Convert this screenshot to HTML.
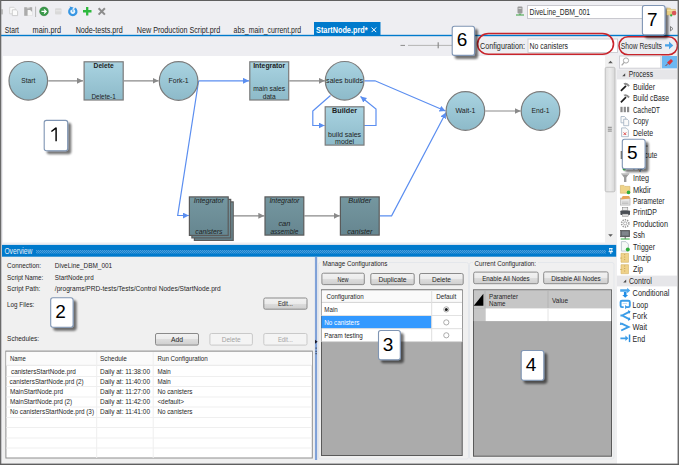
<!DOCTYPE html>
<html><head><meta charset="utf-8"><style>
html,body{margin:0;padding:0;width:679px;height:465px;overflow:hidden;background:#eeeef2}
svg{display:block}
text{font-family:"Liberation Sans",sans-serif;white-space:pre}
</style></head><body>
<svg width="679" height="465" viewBox="0 0 679 465">
<defs>
<linearGradient id="ng" x1="0" y1="0" x2="0" y2="1"><stop offset="0" stop-color="#a9d3e1"/><stop offset="1" stop-color="#8dbac9"/></linearGradient>
<linearGradient id="dg" x1="0" y1="0" x2="0" y2="1"><stop offset="0" stop-color="#7597a0"/><stop offset="1" stop-color="#668690"/></linearGradient>
<linearGradient id="btn" x1="0" y1="0" x2="0" y2="1"><stop offset="0" stop-color="#f2f2f2"/><stop offset="0.5" stop-color="#ebebeb"/><stop offset="0.5" stop-color="#dddddd"/><stop offset="1" stop-color="#cfcfcf"/></linearGradient>
<marker id="ag" markerWidth="6" markerHeight="6" refX="6" refY="3" orient="auto" markerUnits="userSpaceOnUse"><path d="M0 0L6 3L0 6z" fill="#8a8a8a"/></marker>
<marker id="ab" markerWidth="6" markerHeight="6" refX="6" refY="3" orient="auto" markerUnits="userSpaceOnUse"><path d="M0 0L6 3L0 6z" fill="#5b8ef0"/></marker>
<filter id="sh" x="-30%" y="-30%" width="160%" height="160%"><feGaussianBlur in="SourceAlpha" stdDeviation="1.3"/><feOffset dx="2.5" dy="2.5"/><feComponentTransfer><feFuncA type="linear" slope="0.55"/></feComponentTransfer><feMerge><feMergeNode/><feMergeNode in="SourceGraphic"/></feMerge></filter>
<pattern id="dots" width="2" height="2" patternUnits="userSpaceOnUse"><rect width="2" height="2" fill="#1581ce"/><rect x="0" y="0" width="1" height="1" fill="#4b9fdc"/><rect x="1" y="1" width="1" height="1" fill="#4b9fdc"/></pattern>
<linearGradient id="thumb" x1="0" y1="0" x2="1" y2="0"><stop offset="0" stop-color="#dedede"/><stop offset="0.5" stop-color="#ececec"/><stop offset="1" stop-color="#d6d6d6"/></linearGradient>
</defs>
<rect x="0" y="0" width="679" height="465" fill="#eeeef2" />
<rect x="1.2" y="9.2" width="1.8" height="5.2" fill="#bcbcbc" />
<path d="M9.7 7.3h4.2l1.3 1.3v5.2h-5.5z" fill="#fbfbfb" stroke="#d2d2d2" stroke-width="0.9"/>
<path d="M12.3 9.8h3.9l1.4 1.4v4.4h-5.3z" fill="#fbfbfb" stroke="#c8c8c8" stroke-width="0.9"/>
<rect x="24.2" y="7.2" width="8" height="8.6" fill="#ababab"/>
<rect x="26.8" y="7" width="2.8" height="1.4" fill="#dcdcdc"/>
<path d="M27.6 9.9h2.6l2 2v3.9h-4.6z" fill="#f7f7f7"/>
<line x1="35.6" y1="6.6" x2="35.6" y2="17" stroke="#b0b0b0" stroke-width="0.9" />
<circle cx="44" cy="11.4" r="4.3" fill="#3b9b4b" stroke="#2e7f3b" stroke-width="0.6"/>
<path d="M41.4 11.4h4.6M44.1 9.3l2.1 2.1-2.1 2.1" fill="none" stroke="#fff" stroke-width="1.2"/>
<rect x="55" y="8.2" width="6.5" height="6.4" rx="1" fill="#d9d9d9"/>
<rect x="55.5" y="10.3" width="5.5" height="1" fill="#e8e8e8"/>
<circle cx="72.8" cy="11.5" r="3.6" fill="#eaf4fc"/>
<path d="M74.6 8.4A3.6 3.6 0 1 1 71 8.4" fill="none" stroke="#3796e3" stroke-width="2.2"/>
<path d="M69.6 6.6L73.6 7.4L70.9 10.5z" fill="#3796e3"/>
<path d="M72.8 12V9.2" stroke="#5aaee8" stroke-width="1"/>
<path d="M87.2 7v8.5M83 11.25h8.5" stroke="#2db83d" stroke-width="2.3"/>
<path d="M98.6 8.3l6.3 6.3M104.9 8.3l-6.3 6.3" stroke="#8c8c8c" stroke-width="2"/>
<rect x="517.5" y="6.5" width="5" height="7" rx="1" fill="#9a9a9a"/>
<rect x="518.5" y="8" width="3" height="1" fill="#d0d0d0"/>
<line x1="516" y1="15" x2="524" y2="15" stroke="#3aa040" stroke-width="1" />
<line x1="520" y1="13.5" x2="520" y2="15" stroke="#3aa040" stroke-width="1" />
<rect x="527.5" y="5.5" width="118" height="13" fill="#ffffff" stroke="#c9c9cf" stroke-width="1" />
<text x="529.5" y="14.7" font-size="8.5" fill="#1e1e1e" textLength="60.5" lengthAdjust="spacingAndGlyphs" >DiveLine_DBM_001</text>
<path d="M670.5 26.5l2.5 2.2-2.5 2.2z" fill="none" stroke="#6a6a6a" stroke-width="0.8"/>
<text x="4.8" y="32.8" font-size="9" fill="#1e1e1e" textLength="14.2" lengthAdjust="spacingAndGlyphs" >Start</text>
<text x="32.6" y="32.8" font-size="9" fill="#1e1e1e" textLength="28.4" lengthAdjust="spacingAndGlyphs" >main.prd</text>
<text x="75.7" y="32.8" font-size="9" fill="#1e1e1e" textLength="47" lengthAdjust="spacingAndGlyphs" >Node-tests.prd</text>
<text x="136.8" y="32.8" font-size="9" fill="#1e1e1e" textLength="83.4" lengthAdjust="spacingAndGlyphs" >New Production Script.prd</text>
<text x="233.6" y="32.8" font-size="9" fill="#1e1e1e" textLength="67.5" lengthAdjust="spacingAndGlyphs" >abs_main_current.prd</text>
<rect x="314" y="22" width="66.5" height="13.5" fill="#007acc" />
<text x="316" y="32.8" font-size="9" fill="#ffffff" textLength="51.6" lengthAdjust="spacingAndGlyphs" font-weight="bold" >StartNode.prd*</text>
<path d="M371.6 27.5l4.6 4.6M376.2 27.5l-4.6 4.6" stroke="#ffffff" stroke-width="1"/>
<rect x="1" y="34.8" width="677" height="1.4" fill="#007acc" />
<line x1="400.5" y1="45.4" x2="405" y2="45.4" stroke="#8a8a8a" stroke-width="1" />
<line x1="408" y1="45.4" x2="452" y2="45.4" stroke="#b4b4b4" stroke-width="1" />
<rect x="437.6" y="42.3" width="1.2" height="6" fill="#8a8a8a" />
<text x="480" y="48.8" font-size="8.5" fill="#1e1e1e" textLength="45" lengthAdjust="spacingAndGlyphs" >Configuration:</text>
<rect x="528" y="39" width="89.5" height="13.5" fill="#ffffff" stroke="#cfcfd4" stroke-width="1" />
<text x="529.6" y="48.8" font-size="8.5" fill="#1e1e1e" textLength="38.4" lengthAdjust="spacingAndGlyphs" >No canisters</text>
<text x="620.7" y="48.8" font-size="8.5" fill="#2d2d2d" textLength="41.3" lengthAdjust="spacingAndGlyphs" >Show Results</text>
<path d="M665 44.2h4v-2.6l4.3 3.8-4.3 3.8v-2.6h-4z" fill="#4aa3e8"/>
<rect x="3" y="56" width="602" height="186.5" fill="#ffffff" />
<rect x="605" y="56" width="11.5" height="186.5" fill="#f0f0f0" />
<path d="M608.2 63.2l2.3-2.4 2.3 2.4z" fill="#5a5a5a"/>
<rect x="605.2" y="67.3" width="9.8" height="124.5" rx="1.5" fill="url(#thumb)" stroke="#b8b8b8" stroke-width="0.8"/>
<path d="M608.2 234.3l2.3 2.4 2.3-2.4z" fill="#5a5a5a"/>
<line x1="607.8" y1="127.3" x2="611.8" y2="127.3" stroke="#7a7a7a" stroke-width="0.9" />
<line x1="607.8" y1="129.2" x2="611.8" y2="129.2" stroke="#7a7a7a" stroke-width="0.9" />
<line x1="607.8" y1="131.1" x2="611.8" y2="131.1" stroke="#7a7a7a" stroke-width="0.9" />
<path d="M48.3 80.8H83" stroke="#8a8a8a" stroke-width="1.2" fill="none" marker-end="url(#ag)"/>
<path d="M124 80.8H158.5" stroke="#8a8a8a" stroke-width="1.2" fill="none" marker-end="url(#ag)"/>
<path d="M198.6 80.8H249" stroke="#5b8ef0" stroke-width="1.2" fill="none" marker-end="url(#ab)"/>
<path d="M289.3 80.8H324.8" stroke="#8a8a8a" stroke-width="1.2" fill="none" marker-end="url(#ag)"/>
<path d="M364.5 80.8H375L445.5 111" stroke="#5b8ef0" stroke-width="1.2" fill="none" marker-end="url(#ab)"/>
<path d="M330.5 95.5L314.5 109.5L312.8 111V125.5H324.6" stroke="#5b8ef0" stroke-width="1.2" fill="none" marker-end="url(#ab)"/>
<path d="M364.3 125.5H376V109L360.5 96.5" stroke="#5b8ef0" stroke-width="1.2" fill="none" marker-end="url(#ab)"/>
<path d="M198.6 81L177.7 215.5H188.8" stroke="#5b8ef0" stroke-width="1.2" fill="none" marker-end="url(#ab)"/>
<path d="M229.5 215.8H264.3" stroke="#8a8a8a" stroke-width="1.2" fill="none" marker-end="url(#ag)"/>
<path d="M304.4 215.8H339.7" stroke="#8a8a8a" stroke-width="1.2" fill="none" marker-end="url(#ag)"/>
<path d="M379.8 215.8H391.6L446 112.5" stroke="#5b8ef0" stroke-width="1.2" fill="none" marker-end="url(#ab)"/>
<path d="M485.3 111H520.7" stroke="#8a8a8a" stroke-width="1.2" fill="none" marker-end="url(#ag)"/>
<circle cx="28.3" cy="80.8" r="19.3" fill="url(#ng)" stroke="#7b7b7b" stroke-width="1.2"/>
<text x="28.3" y="83" font-size="7" fill="#222" textLength="14" lengthAdjust="spacingAndGlyphs" text-anchor="middle" >Start</text>
<rect x="84.1" y="61.800000000000004" width="39.099999999999994" height="38.199999999999996" fill="url(#ng)" stroke="#7b7b7b" stroke-width="1.2"/>
<text x="103.6" y="68" font-size="7" fill="#222" textLength="20" lengthAdjust="spacingAndGlyphs" font-weight="bold" text-anchor="middle" >Delete</text>
<text x="103.6" y="99" font-size="7" fill="#222" textLength="24.3" lengthAdjust="spacingAndGlyphs" text-anchor="middle" >Delete-1</text>
<circle cx="178.6" cy="81" r="19.3" fill="url(#ng)" stroke="#7b7b7b" stroke-width="1.2"/>
<text x="178.6" y="83.2" font-size="7" fill="#222" textLength="20" lengthAdjust="spacingAndGlyphs" text-anchor="middle" >Fork-1</text>
<rect x="249.79999999999998" y="61.800000000000004" width="38.9" height="38.199999999999996" fill="url(#ng)" stroke="#7b7b7b" stroke-width="1.2"/>
<text x="269.2" y="68" font-size="7" fill="#222" textLength="32" lengthAdjust="spacingAndGlyphs" font-weight="bold" text-anchor="middle" >Integrator</text>
<text x="269.2" y="91.3" font-size="7" fill="#222" textLength="32" lengthAdjust="spacingAndGlyphs" text-anchor="middle" >main sales</text>
<text x="269.2" y="98.7" font-size="7" fill="#222" textLength="13" lengthAdjust="spacingAndGlyphs" text-anchor="middle" >data</text>
<circle cx="344.6" cy="80.8" r="19.3" fill="url(#ng)" stroke="#7b7b7b" stroke-width="1.2"/>
<text x="344.6" y="83" font-size="7" fill="#222" textLength="37" lengthAdjust="spacingAndGlyphs" text-anchor="middle" >sales builds</text>
<rect x="325.20000000000005" y="106.8" width="38.8" height="38.3" fill="url(#ng)" stroke="#7b7b7b" stroke-width="1.2"/>
<text x="344.6" y="112.8" font-size="7" fill="#222" textLength="25" lengthAdjust="spacingAndGlyphs" font-weight="bold" text-anchor="middle" >Builder</text>
<text x="344.6" y="136.5" font-size="7" fill="#222" textLength="33" lengthAdjust="spacingAndGlyphs" text-anchor="middle" >build sales</text>
<text x="344.6" y="143.5" font-size="7" fill="#222" textLength="19" lengthAdjust="spacingAndGlyphs" text-anchor="middle" >model</text>
<circle cx="465.4" cy="111" r="19.3" fill="url(#ng)" stroke="#7b7b7b" stroke-width="1.2"/>
<text x="465.4" y="113.2" font-size="7" fill="#222" textLength="20" lengthAdjust="spacingAndGlyphs" text-anchor="middle" >Wait-1</text>
<circle cx="540.5" cy="111" r="19.3" fill="url(#ng)" stroke="#7b7b7b" stroke-width="1.2"/>
<text x="540.5" y="113.2" font-size="7" fill="#222" textLength="18" lengthAdjust="spacingAndGlyphs" text-anchor="middle" >End-1</text>
<rect x="194.4" y="201.9" width="38.8" height="38.5" fill="url(#dg)" stroke="#5a5a5a" stroke-width="1.2"/>
<rect x="191.9" y="199.4" width="38.8" height="38.5" fill="url(#dg)" stroke="#5a5a5a" stroke-width="1.2"/>
<rect x="189.4" y="196.9" width="38.8" height="38.5" fill="url(#dg)" stroke="#5a5a5a" stroke-width="1.2"/>
<text x="208.8" y="203" font-size="7" fill="#1e1e1e" textLength="30" lengthAdjust="spacingAndGlyphs" font-style="italic" text-anchor="middle" >Integrator</text>
<text x="208.8" y="233.5" font-size="7" fill="#1e1e1e" textLength="27" lengthAdjust="spacingAndGlyphs" font-style="italic" text-anchor="middle" >canisters</text>
<rect x="265.0" y="196.9" width="38.8" height="38.199999999999996" fill="url(#dg)" stroke="#5a5a5a" stroke-width="1.2"/>
<text x="284.4" y="203" font-size="7" fill="#1e1e1e" textLength="30" lengthAdjust="spacingAndGlyphs" font-style="italic" text-anchor="middle" >Integrator</text>
<text x="284.4" y="226" font-size="7" fill="#1e1e1e" textLength="12" lengthAdjust="spacingAndGlyphs" font-style="italic" text-anchor="middle" >can</text>
<text x="284.4" y="233.5" font-size="7" fill="#1e1e1e" textLength="28" lengthAdjust="spacingAndGlyphs" font-style="italic" text-anchor="middle" >assemble</text>
<rect x="340.40000000000003" y="196.9" width="38.8" height="38.199999999999996" fill="url(#dg)" stroke="#5a5a5a" stroke-width="1.2"/>
<text x="359.8" y="203" font-size="7" fill="#1e1e1e" textLength="23" lengthAdjust="spacingAndGlyphs" font-style="italic" text-anchor="middle" >Builder</text>
<text x="359.8" y="233.5" font-size="7" fill="#1e1e1e" textLength="25" lengthAdjust="spacingAndGlyphs" font-style="italic" text-anchor="middle" >canister</text>
<rect x="477.5" y="33.5" width="136" height="20.8" rx="11" ry="10.4" fill="none" stroke="#c8242b" stroke-width="1.6"/>
<rect x="619" y="36.8" width="58.5" height="17.9" rx="9" ry="8.9" fill="none" stroke="#c8242b" stroke-width="1.6"/>
<rect x="2" y="256.6" width="614.5" height="207" fill="#f0f0f0" />
<rect x="2" y="244.9" width="614.2" height="11.8" fill="#007acc" />
<rect x="36" y="250" width="570" height="3.5" fill="url(#dots)" />
<text x="4.4" y="254" font-size="8.5" fill="#e4eef8" textLength="28" lengthAdjust="spacingAndGlyphs" >Overview</text>
<path d="M609 248.5h3.6M609.8 248.5v3.2h2v-3.2M608.6 251.7h4.4M610.8 251.7v2.3" fill="none" stroke="#ffffff" stroke-width="0.9"/>
<text x="7.1" y="267.9" font-size="7.8" fill="#262626" textLength="33.9" lengthAdjust="spacingAndGlyphs" >Connection:</text>
<text x="7.1" y="279.5" font-size="7.8" fill="#262626" textLength="36.2" lengthAdjust="spacingAndGlyphs" >Script Name:</text>
<text x="7.1" y="291.4" font-size="7.8" fill="#262626" textLength="33.2" lengthAdjust="spacingAndGlyphs" >Script Path:</text>
<text x="7.1" y="307" font-size="7.8" fill="#262626" textLength="27.2" lengthAdjust="spacingAndGlyphs" >Log Files:</text>
<text x="7.1" y="340.9" font-size="7.8" fill="#262626" textLength="32" lengthAdjust="spacingAndGlyphs" >Schedules:</text>
<text x="54.8" y="267.9" font-size="7.8" fill="#262626" textLength="57.4" lengthAdjust="spacingAndGlyphs" >DiveLine_DBM_001</text>
<text x="54.8" y="279.5" font-size="7.8" fill="#262626" textLength="38.8" lengthAdjust="spacingAndGlyphs" >StartNode.prd</text>
<text x="54.8" y="291.4" font-size="7.8" fill="#262626" textLength="165.9" lengthAdjust="spacingAndGlyphs" >/programs/PRD-tests/Tests/Control Nodes/StartNode.prd</text>
<rect x="263.8" y="298.0" width="43.2" height="11.2" rx="1.5" fill="url(#btn)" stroke="#8a8a8a" stroke-width="1"/>
<text x="285.40000000000003" y="306.40000000000003" font-size="7.8" fill="#262626" textLength="15" lengthAdjust="spacingAndGlyphs" text-anchor="middle" >Edit...</text>
<rect x="155.5" y="333.5" width="43" height="11.6" rx="1.5" fill="url(#btn)" stroke="#8a8a8a" stroke-width="1"/>
<text x="177.0" y="342.1" font-size="7.8" fill="#262626" textLength="12" lengthAdjust="spacingAndGlyphs" text-anchor="middle" >Add</text>
<rect x="209.9" y="333.5" width="42.5" height="11.6" rx="1.5" fill="#f4f4f4" stroke="#c9c9c9" stroke-width="1"/>
<text x="231.15" y="342.1" font-size="7.8" fill="#a3a3a3" textLength="19" lengthAdjust="spacingAndGlyphs" text-anchor="middle" >Delete</text>
<rect x="263.8" y="333.5" width="43.2" height="11.6" rx="1.5" fill="#f4f4f4" stroke="#c9c9c9" stroke-width="1"/>
<text x="285.40000000000003" y="342.1" font-size="7.8" fill="#a3a3a3" textLength="15" lengthAdjust="spacingAndGlyphs" text-anchor="middle" >Edit...</text>
<rect x="5.9" y="351.1" width="306.4" height="106.9" fill="#ffffff" stroke="#8e8e8e" stroke-width="1"/>
<line x1="5.8" y1="351.5" x2="312.5" y2="351.5" stroke="#a0a0a0" stroke-width="1" />
<rect x="6.3" y="351.8" width="305.7" height="13.5" fill="#fbfbfb" />
<line x1="6.3" y1="365.3" x2="312" y2="365.3" stroke="#e8e8e8" stroke-width="1" />
<line x1="96.7" y1="352" x2="96.7" y2="458" stroke="#eeeeee" stroke-width="1" />
<line x1="153.2" y1="352" x2="153.2" y2="458" stroke="#eeeeee" stroke-width="1" />
<rect x="6.3" y="376" width="305.7" height="1" fill="#efefef" />
<rect x="6.3" y="386" width="305.7" height="1" fill="#efefef" />
<rect x="6.3" y="396.5" width="305.7" height="1" fill="#efefef" />
<rect x="6.3" y="406.5" width="305.7" height="1" fill="#efefef" />
<rect x="6.3" y="417" width="305.7" height="1" fill="#efefef" />
<rect x="6.3" y="427" width="305.7" height="1" fill="#efefef" />
<rect x="6.3" y="437.5" width="305.7" height="1" fill="#efefef" />
<rect x="6.3" y="447.5" width="305.7" height="1" fill="#efefef" />
<text x="10" y="360.7" font-size="7.8" fill="#262626" textLength="15.8" lengthAdjust="spacingAndGlyphs" >Name</text>
<text x="100" y="360.7" font-size="7.8" fill="#262626" textLength="26.8" lengthAdjust="spacingAndGlyphs" >Schedule</text>
<text x="157.4" y="360.7" font-size="7.8" fill="#262626" textLength="50.4" lengthAdjust="spacingAndGlyphs" >Run Configuration</text>
<text x="11" y="373.8" font-size="7.8" fill="#262626" textLength="64.8" lengthAdjust="spacingAndGlyphs" >canistersStartNode.prd</text>
<text x="100" y="373.8" font-size="7.8" fill="#262626" textLength="50" lengthAdjust="spacingAndGlyphs" >Daily at: 11:38:00</text>
<text x="157.4" y="373.8" font-size="7.8" fill="#262626" textLength="13.4" lengthAdjust="spacingAndGlyphs" >Main</text>
<text x="9.6" y="383.95" font-size="7.8" fill="#262626" textLength="74.1" lengthAdjust="spacingAndGlyphs" >canistersStartNode.prd (2)</text>
<text x="100" y="383.95" font-size="7.8" fill="#262626" textLength="50" lengthAdjust="spacingAndGlyphs" >Daily at: 11:40:00</text>
<text x="157.4" y="383.95" font-size="7.8" fill="#262626" textLength="13.4" lengthAdjust="spacingAndGlyphs" >Main</text>
<text x="10" y="394.1" font-size="7.8" fill="#262626" textLength="53" lengthAdjust="spacingAndGlyphs" >MainStartNode.prd</text>
<text x="100" y="394.1" font-size="7.8" fill="#262626" textLength="50" lengthAdjust="spacingAndGlyphs" >Daily at: 11:27:00</text>
<text x="157.4" y="394.1" font-size="7.8" fill="#262626" textLength="35.1" lengthAdjust="spacingAndGlyphs" >No canisters</text>
<text x="10" y="404.25" font-size="7.8" fill="#262626" textLength="62.2" lengthAdjust="spacingAndGlyphs" >MainStartNode.prd (2)</text>
<text x="100" y="404.25" font-size="7.8" fill="#262626" textLength="50" lengthAdjust="spacingAndGlyphs" >Daily at: 11:42:00</text>
<text x="157.4" y="404.25" font-size="7.8" fill="#262626" textLength="26.5" lengthAdjust="spacingAndGlyphs" >&lt;default&gt;</text>
<text x="10" y="414.40000000000003" font-size="7.8" fill="#262626" textLength="84" lengthAdjust="spacingAndGlyphs" >No canistersStartNode.prd (3)</text>
<text x="100" y="414.40000000000003" font-size="7.8" fill="#262626" textLength="50" lengthAdjust="spacingAndGlyphs" >Daily at: 11:41:00</text>
<text x="157.4" y="414.40000000000003" font-size="7.8" fill="#262626" textLength="35.1" lengthAdjust="spacingAndGlyphs" >No canisters</text>
<rect x="314.9" y="257" width="2.3" height="203" fill="#94b0de" />
<rect x="315.5" y="257" width="1.1" height="203" fill="#7196d2" />
<path d="M315 339.8L317.6 341.8L315 343.8z" fill="#1a1a2a"/>
<rect x="315.6" y="347.6" width="1" height="1" fill="#222" />
<rect x="315.6" y="350.8" width="1" height="1" fill="#222" />
<rect x="315.6" y="353.2" width="1" height="1" fill="#222" />
<rect x="318.5" y="262.5" width="150" height="196.5" rx="2" fill="none" stroke="#e4e7eb" stroke-width="1"/>
<rect x="321" y="259" width="68" height="7" fill="#f0f0f0" />
<text x="322.6" y="266" font-size="7.8" fill="#262626" textLength="64.8" lengthAdjust="spacingAndGlyphs" >Manage Configurations</text>
<rect x="321.9" y="273.2" width="42.4" height="11.4" rx="1.5" fill="url(#btn)" stroke="#8a8a8a" stroke-width="1"/>
<text x="343.09999999999997" y="281.7" font-size="7.8" fill="#262626" textLength="11" lengthAdjust="spacingAndGlyphs" text-anchor="middle" >New</text>
<rect x="370.8" y="273.5" width="43.4" height="11.2" rx="1.5" fill="url(#btn)" stroke="#8a8a8a" stroke-width="1"/>
<text x="392.5" y="281.90000000000003" font-size="7.8" fill="#262626" textLength="28" lengthAdjust="spacingAndGlyphs" text-anchor="middle" >Duplicate</text>
<rect x="419.6" y="273.5" width="43.6" height="11.2" rx="1.5" fill="url(#btn)" stroke="#8a8a8a" stroke-width="1"/>
<text x="441.40000000000003" y="281.90000000000003" font-size="7.8" fill="#262626" textLength="19" lengthAdjust="spacingAndGlyphs" text-anchor="middle" >Delete</text>
<rect x="321.5" y="289.9" width="140.7" height="165.6" fill="#ababab" stroke="#5a5a5a" stroke-width="1"/>
<rect x="321.5" y="290.3" width="140.7" height="12.1" fill="#fafafa" />
<line x1="321.5" y1="302.4" x2="462.2" y2="302.4" stroke="#d5d5d5" stroke-width="1" />
<rect x="321.5" y="302.9" width="140.7" height="12.8" fill="#ffffff" />
<rect x="321.5" y="315.7" width="110.2" height="13" fill="#3399ff" />
<rect x="431.7" y="315.7" width="30.5" height="13" fill="#ffffff" />
<rect x="321.5" y="328.7" width="140.7" height="13" fill="#ffffff" />
<line x1="321.5" y1="315.5" x2="462.2" y2="315.5" stroke="#e2e2e2" stroke-width="1" />
<line x1="321.5" y1="328.7" x2="462.2" y2="328.7" stroke="#e2e2e2" stroke-width="1" />
<line x1="321.5" y1="341.6" x2="462.2" y2="341.6" stroke="#d8d8d8" stroke-width="1" />
<line x1="431.7" y1="290.3" x2="431.7" y2="341.8" stroke="#dedede" stroke-width="1" />
<text x="326.6" y="298.6" font-size="7.8" fill="#262626" textLength="37" lengthAdjust="spacingAndGlyphs" >Configuration</text>
<text x="436.2" y="298.8" font-size="7.8" fill="#262626" textLength="20.1" lengthAdjust="spacingAndGlyphs" >Default</text>
<text x="324.3" y="311.5" font-size="7.8" fill="#262626" textLength="13.4" lengthAdjust="spacingAndGlyphs" >Main</text>
<text x="324.3" y="325" font-size="7.8" fill="#ffffff" textLength="35.1" lengthAdjust="spacingAndGlyphs" >No canisters</text>
<text x="324.3" y="338.4" font-size="7.8" fill="#262626" textLength="38.5" lengthAdjust="spacingAndGlyphs" >Param testing</text>
<circle cx="446.3" cy="309.4" r="2.6" fill="#fff" stroke="#8a8a8a" stroke-width="0.7"/><circle cx="446.3" cy="309.4" r="1.5" fill="#1a1a1a"/>
<circle cx="446.3" cy="322.4" r="2.6" fill="#fff" stroke="#8a8a8a" stroke-width="0.7"/>
<circle cx="446.3" cy="335.3" r="2.6" fill="#fff" stroke="#8a8a8a" stroke-width="0.7"/>
<rect x="469.5" y="262.5" width="144.5" height="196.5" rx="2" fill="none" stroke="#e4e7eb" stroke-width="1"/>
<rect x="473" y="259" width="65" height="7" fill="#f0f0f0" />
<text x="474.6" y="265.8" font-size="7.8" fill="#262626" textLength="61.5" lengthAdjust="spacingAndGlyphs" >Current Configuration:</text>
<rect x="473.7" y="272.1" width="64.5" height="11.6" rx="1.5" fill="url(#btn)" stroke="#8a8a8a" stroke-width="1"/>
<text x="505.95" y="280.70000000000005" font-size="7.8" fill="#262626" textLength="47.5" lengthAdjust="spacingAndGlyphs" text-anchor="middle" >Enable All Nodes</text>
<rect x="543.7" y="271.9" width="64.4" height="11.8" rx="1.5" fill="url(#btn)" stroke="#8a8a8a" stroke-width="1"/>
<text x="575.9000000000001" y="280.59999999999997" font-size="7.8" fill="#262626" textLength="49.5" lengthAdjust="spacingAndGlyphs" text-anchor="middle" >Disable All Nodes</text>
<rect x="473.5" y="289.9" width="138" height="166.3" fill="#ababab" stroke="#5a5a5a" stroke-width="1"/>
<rect x="473.7" y="290.3" width="137.5" height="18" fill="#c6c6c6" />
<line x1="485" y1="290.3" x2="485" y2="321" stroke="#b4b4b4" stroke-width="1" />
<line x1="548" y1="290.3" x2="548" y2="308" stroke="#b4b4b4" stroke-width="1" />
<rect x="485.5" y="308.3" width="125.7" height="12.8" fill="#ffffff" />
<rect x="473.7" y="308.3" width="11.3" height="12.8" fill="#c6c6c6" />
<line x1="548" y1="308.3" x2="548" y2="321" stroke="#e4e4e4" stroke-width="1" />
<path d="M473.7 305.8L483.4 293.7V305.8z" fill="#000"/>
<text x="489" y="298.6" font-size="7.8" fill="#262626" textLength="29" lengthAdjust="spacingAndGlyphs" >Parameter</text>
<text x="489" y="305.9" font-size="7.8" fill="#262626" textLength="16.5" lengthAdjust="spacingAndGlyphs" >Name</text>
<text x="552" y="302.6" font-size="7.8" fill="#262626" textLength="16" lengthAdjust="spacingAndGlyphs" >Value</text>
<rect x="617" y="56" width="60.5" height="408" fill="#ffffff" />
<rect x="617" y="56" width="60.5" height="13.5" fill="#eeeef2" />
<rect x="619.5" y="56" width="41.4" height="12.2" fill="#ffffff" stroke="#cfcfd4" stroke-width="1" />
<circle cx="626" cy="60.5" r="2.6" fill="none" stroke="#a9a9a9" stroke-width="1"/><path d="M624.2 62.4l-2.5 3" stroke="#a9a9a9" stroke-width="1.3"/>
<rect x="662" y="56" width="15" height="12.3" fill="#6cb8f2" />
<path d="M667 62.5l4-3.5 2 2-3.5 4z" fill="#d9353b"/><path d="M668 63.5l-2.5 2.5" stroke="#7a2a2a" stroke-width="0.8"/>
<rect x="617" y="69.4" width="60" height="10" fill="#e6e6e9" />
<path d="M622.2 76.2l3-3v3z" fill="#4a4a4a"/>
<text x="628.8" y="76.5" font-size="8.5" fill="#1e1e1e" textLength="24.2" lengthAdjust="spacingAndGlyphs" >Process</text>
<text x="633" y="90.0" font-size="8.5" fill="#1e1e1e" textLength="22" lengthAdjust="spacingAndGlyphs" >Builder</text>
<text x="633" y="101.4" font-size="8.5" fill="#1e1e1e" textLength="36" lengthAdjust="spacingAndGlyphs" >Build cBase</text>
<text x="633" y="112.8" font-size="8.5" fill="#1e1e1e" textLength="27" lengthAdjust="spacingAndGlyphs" >CacheDT</text>
<text x="633" y="124.2" font-size="8.5" fill="#1e1e1e" textLength="15.5" lengthAdjust="spacingAndGlyphs" >Copy</text>
<text x="633" y="135.6" font-size="8.5" fill="#1e1e1e" textLength="20" lengthAdjust="spacingAndGlyphs" >Delete</text>
<text x="633" y="147.0" font-size="8.5" fill="#1e1e1e" textLength="9" lengthAdjust="spacingAndGlyphs" >Dir</text>
<text x="633" y="158.4" font-size="8.5" fill="#1e1e1e" textLength="24.3" lengthAdjust="spacingAndGlyphs" >Execute</text>
<text x="633" y="169.8" font-size="8.5" fill="#1e1e1e" textLength="10" lengthAdjust="spacingAndGlyphs" >Ftp</text>
<text x="633" y="181.2" font-size="8.5" fill="#1e1e1e" textLength="16" lengthAdjust="spacingAndGlyphs" >Integ</text>
<text x="633" y="192.60000000000002" font-size="8.5" fill="#1e1e1e" textLength="18" lengthAdjust="spacingAndGlyphs" >Mkdir</text>
<text x="633" y="204.0" font-size="8.5" fill="#1e1e1e" textLength="31.5" lengthAdjust="spacingAndGlyphs" >Parameter</text>
<text x="633" y="215.4" font-size="8.5" fill="#1e1e1e" textLength="24" lengthAdjust="spacingAndGlyphs" >PrintDP</text>
<text x="633" y="226.8" font-size="8.5" fill="#1e1e1e" textLength="35" lengthAdjust="spacingAndGlyphs" >Production</text>
<text x="633" y="238.20000000000002" font-size="8.5" fill="#1e1e1e" textLength="12" lengthAdjust="spacingAndGlyphs" >Ssh</text>
<text x="633" y="249.6" font-size="8.5" fill="#1e1e1e" textLength="22" lengthAdjust="spacingAndGlyphs" >Trigger</text>
<text x="633" y="261.0" font-size="8.5" fill="#1e1e1e" textLength="18" lengthAdjust="spacingAndGlyphs" >Unzip</text>
<text x="633" y="272.4" font-size="8.5" fill="#1e1e1e" textLength="10" lengthAdjust="spacingAndGlyphs" >Zip</text>
<rect x="617" y="275.6" width="60" height="10.8" fill="#e6e6e9" />
<path d="M623.2 282.4l3-3v3z" fill="#4a4a4a"/>
<text x="629" y="283.9" font-size="8.5" fill="#1e1e1e" textLength="22.8" lengthAdjust="spacingAndGlyphs" >Control</text>
<text x="632.6" y="296.1" font-size="8.5" fill="#1e1e1e" textLength="36.8" lengthAdjust="spacingAndGlyphs" >Conditional</text>
<text x="632.6" y="307.5" font-size="8.5" fill="#1e1e1e" textLength="15.5" lengthAdjust="spacingAndGlyphs" >Loop</text>
<text x="632.6" y="318.90000000000003" font-size="8.5" fill="#1e1e1e" textLength="14.5" lengthAdjust="spacingAndGlyphs" >Fork</text>
<text x="632.6" y="330.3" font-size="8.5" fill="#1e1e1e" textLength="14.5" lengthAdjust="spacingAndGlyphs" >Wait</text>
<text x="632.6" y="341.70000000000005" font-size="8.5" fill="#1e1e1e" textLength="12.5" lengthAdjust="spacingAndGlyphs" >End</text>
<g transform="translate(625.2,86.6)"><path d="M-4.3 4.3L0.8 -0.8" stroke="#1a1a1a" stroke-width="1.7"/><path d="M-1.8 -3.2Q1.5 -5.2 4.6 -1.2L3.2 0.2Q1.5 -2 -0.3 -1.6z" fill="#8c8c8c"/></g>
<g transform="translate(625.2,98.0)"><path d="M-4.3 4.3L0.8 -0.8" stroke="#1a1a1a" stroke-width="1.7"/><path d="M-1.8 -3.2Q1.5 -5.2 4.6 -1.2L3.2 0.2Q1.5 -2 -0.3 -1.6z" fill="#8c8c8c"/></g>
<g transform="translate(625.2,109.39999999999999)"><rect x="-4.8" y="-2.6" width="2.2" height="5.4" fill="#8a8a8a"/><rect x="-1.5" y="-2.6" width="2.2" height="5.4" fill="#8a8a8a"/><rect x="1.8" y="-2.6" width="2.2" height="5.4" fill="#8a8a8a"/></g>
<g transform="translate(625.2,120.8)"><path d="M-4.2 -4.3h3.5l1.3 1.3v5h-4.8z" fill="#fafafa" stroke="#9fb0c0" stroke-width="0.8"/><path d="M-1.5 -1.6h3.5l1.5 1.5v5h-5z" fill="#fafafa" stroke="#9fb0c0" stroke-width="0.8"/></g>
<g transform="translate(625.2,132.2)"><path d="M-3.6 -4.3h4.5l2.3 2.3v6.5h-6.8z" fill="#fafafa" stroke="#9fb0c0" stroke-width="0.8"/><path d="M-1.6 0.2l2.6 2.6M1 0.2l-2.6 2.6" stroke="#d83a3a" stroke-width="0.9"/></g>
<g transform="translate(625.2,155.0)"><rect x="-4.5" y="-4" width="9" height="8" fill="#6f6a60"/></g>
<g transform="translate(625.2,166.4)"><circle cx="-1" cy="2.5" r="1.6" fill="#2a9c3a"/></g>
<g transform="translate(625.2,177.79999999999998)"><path d="M-4.2 -4.2h8.4l-3 4v4.4h-2.4v-4.4z" fill="#9b9b9b"/><path d="M-3 -3.6h6" stroke="#d8d8d8" stroke-width="0.8"/></g>
<g transform="translate(625.2,189.20000000000002)"><path d="M-4.8 -3.8h3.5l1 1h5v6.8h-9.5z" fill="#efd48a" stroke="#d1b062" stroke-width="0.6"/><circle cx="3.3" cy="3.2" r="1.8" fill="#2fae3a"/></g>
<g transform="translate(625.2,200.6)"><rect x="-4.8" y="-2.5" width="9.6" height="7" fill="#e6e6e6" stroke="#a8a8a8" stroke-width="0.6"/><path d="M-4.5 -1.2l2-3.5h6.5l1 2.5z" fill="#e6a45a"/><path d="M-3.3 1.5h6.6M-3.3 3h6.6" stroke="#9a9a9a" stroke-width="0.5"/></g>
<g transform="translate(625.2,212.0)"><rect x="-2.6" y="-4.4" width="5.2" height="3" fill="#e8e8e8" stroke="#777" stroke-width="0.5"/><rect x="-4.8" y="-1.6" width="9.6" height="4.6" rx="0.8" fill="#4a4f55"/><rect x="-3" y="2" width="6" height="2.4" fill="#dcdcdc" stroke="#777" stroke-width="0.4"/></g>
<g transform="translate(625.2,223.4)"><circle cx="0" cy="0" r="3.6" fill="none" stroke="#9a9a9a" stroke-width="1.6" stroke-dasharray="1.3 1"/><circle cx="0" cy="0" r="1.6" fill="none" stroke="#9a9a9a" stroke-width="0.8"/></g>
<g transform="translate(625.2,234.8)"><rect x="-4.5" y="-4.5" width="9" height="6.5" fill="#5a5e63" stroke="#3a3a3a" stroke-width="0.5"/><rect x="-3.5" y="-3.5" width="7" height="4.3" fill="#80868c"/><path d="M-4.5 4.2h9" stroke="#2fae3a" stroke-width="1"/><path d="M0 2v2" stroke="#555" stroke-width="1"/></g>
<g transform="translate(625.2,246.2)"><path d="M-3.8 -4.6h4.5l2.5 2.5v7h-7z" fill="#f6f9f6" stroke="#a7b5bf" stroke-width="0.7"/><circle cx="2.6" cy="3.2" r="2" fill="#2fae3a"/></g>
<g transform="translate(625.2,257.6)"><path d="M-4.2 -4.3h7.5v9h-7.5z" fill="#efd28a" stroke="#d3b467" stroke-width="0.6"/><path d="M-0.5 -3.5v1M-0.5 -1v1M-0.5 1.5v1" stroke="#b99447" stroke-width="0.8"/><path d="M-5 0.5h2" stroke="#d3b467" stroke-width="1"/></g>
<g transform="translate(625.2,269.0)"><path d="M-4.2 -4.3h7.5v9h-7.5z" fill="#efd28a" stroke="#d3b467" stroke-width="0.6"/><path d="M-0.5 -3.5v1M-0.5 -1v1M-0.5 1.5v1" stroke="#b99447" stroke-width="0.8"/><path d="M-5 0.5h2" stroke="#d3b467" stroke-width="1"/></g>
<g transform="translate(625.2,292.70000000000005)"><path d="M-5 -3.4h7v-1.6l3 2.8-3 2.8v-1.6h-7z" fill="#4aa6ec"/><path d="M-1.3 -0.8h2.6v3h1.6l-2.9 2.8-2.9-2.8h1.6z" fill="#1f8de6"/></g>
<g transform="translate(625.2,304.1)"><path d="M-1.5 3H-3.2Q-4.6 3 -4.6 1.6V-2Q-4.6 -3.4 -3.2 -3.4H3.2Q4.6 -3.4 4.6 -2V1.6Q4.6 3 3.2 3H1.5" fill="none" stroke="#3b9de8" stroke-width="1.9"/><path d="M0 0.8l2.2 2.2-2.2 2.2z" fill="#2a8fe2"/><path d="M-2.6 -0.6h4.4" stroke="#bfe0f8" stroke-width="1.1"/></g>
<g transform="translate(625.2,315.50000000000006)"><path d="M4 -3.6L-3 0L4 3.6M-4.8 0h2" fill="none" stroke="#3b9de8" stroke-width="1.9"/><path d="M2.8 -5.4l2.6 1.4-1.6 2.4z" fill="#2a8fe2"/><path d="M2.8 5.4l2.6-1.4-1.6-2.4z" fill="#2a8fe2"/></g>
<g transform="translate(625.2,326.90000000000003)"><path d="M-4 -3.6L3.4 0L-4 3.6" fill="none" stroke="#3b9de8" stroke-width="1.9"/><path d="M-4.6 -5l1.2 2.6-2 0.6z" fill="#2a8fe2"/><path d="M-1 1.5h5.5" stroke="#3b9de8" stroke-width="0"/></g>
<g transform="translate(625.2,338.30000000000007)"><path d="M-4.8 -0.9h5v-1.9l3 2.8-3 2.8v-1.9h-5z" fill="#3b9de8"/><rect x="3.6" y="-3.8" width="1.5" height="7.6" fill="#2a8fe2"/></g>
<rect x="645.4" y="145.6" width="2.4" height="0.9" fill="#555" />
<rect x="0" y="0" width="679" height="1" fill="#5f5f5f" />
<rect x="0" y="0" width="1.3" height="465" fill="#6a6a6a" />
<rect x="677.6" y="0" width="1.4" height="465" fill="#6a6a6a" />
<rect x="0" y="463.6" width="679" height="1.4" fill="#5f5f5f" />
<g filter="url(#sh)"><rect x="44.2" y="120.4" width="23.5" height="30.4" rx="2.2" fill="#ffffff" stroke="#7f95b4" stroke-width="1.1"/></g>
<path d="M56.1 127.6V141.3M56.1 127.9L51.4 131.5" fill="none" stroke="#000" stroke-width="1.45"/>
<g filter="url(#sh)"><rect x="50.7" y="297.8" width="22.4" height="29.5" rx="2.2" fill="#ffffff" stroke="#7f95b4" stroke-width="1.1"/></g>
<text x="60.50000000000001" y="317.95" font-size="19" fill="#000" text-anchor="middle" >2</text>
<g filter="url(#sh)"><rect x="378.5" y="330.5" width="21.8" height="29.2" rx="2.2" fill="#ffffff" stroke="#7f95b4" stroke-width="1.1"/></g>
<text x="388.0" y="350.5" font-size="19" fill="#000" text-anchor="middle" >3</text>
<g filter="url(#sh)"><rect x="521.2" y="350.5" width="22.6" height="29.8" rx="2.2" fill="#ffffff" stroke="#7f95b4" stroke-width="1.1"/></g>
<text x="531.1" y="370.79999999999995" font-size="19" fill="#000" text-anchor="middle" >4</text>
<g filter="url(#sh)"><rect x="622.3" y="139.2" width="22.8" height="29.6" rx="2.2" fill="#ffffff" stroke="#7f95b4" stroke-width="1.1"/></g>
<text x="632.3" y="159.4" font-size="19" fill="#000" text-anchor="middle" >5</text>
<g filter="url(#sh)"><rect x="452.2" y="26.2" width="22.3" height="29.2" rx="2.2" fill="#ffffff" stroke="#7f95b4" stroke-width="1.1"/></g>
<text x="461.95" y="46.199999999999996" font-size="19" fill="#000" text-anchor="middle" >6</text>
<g filter="url(#sh)"><rect x="642.4" y="5.5" width="22.6" height="29.4" rx="2.2" fill="#ffffff" stroke="#7f95b4" stroke-width="1.1"/></g>
<text x="652.3" y="25.6" font-size="19" fill="#000" text-anchor="middle" >7</text>
<path d="M667 8.2h3.2l1 1.2h4.3v5.6h-8.5z" fill="#e8cf86" stroke="#cfb062" stroke-width="0.5"/>
<path d="M667.2 10.5h8.3" stroke="#f4e3b0" stroke-width="0.8"/>
<circle cx="674.1" cy="13" r="2.3" fill="#d8575a"/>
<circle cx="671.2" cy="15.4" r="1.1" fill="#2fae3a"/>
</svg>
</body></html>
